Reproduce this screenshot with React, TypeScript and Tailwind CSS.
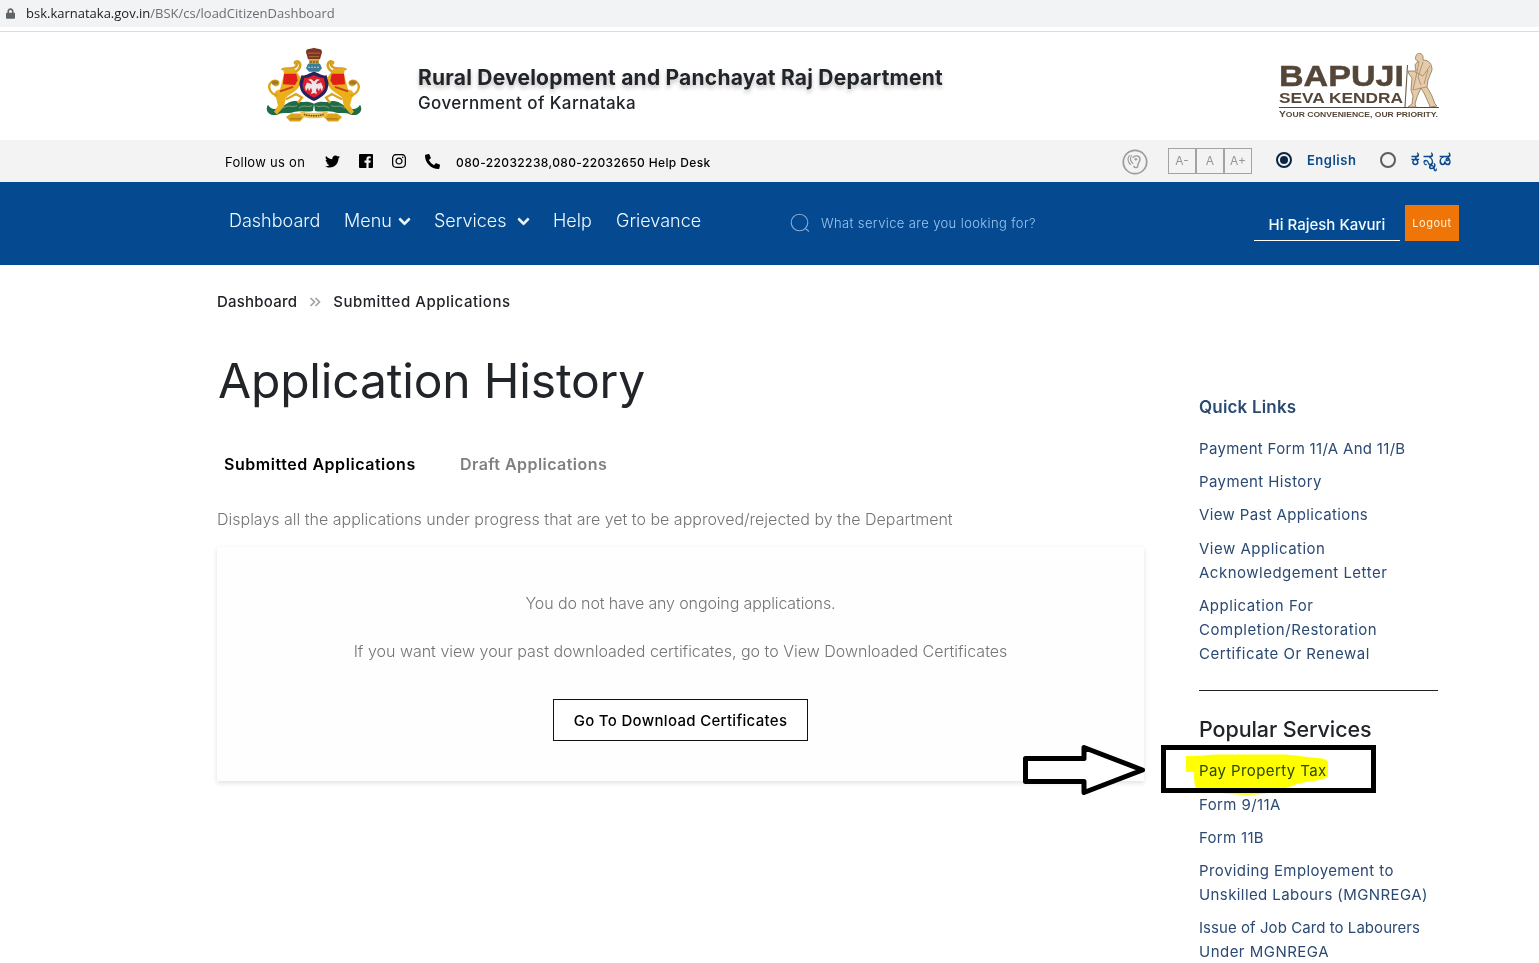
import type { ReactNode } from "react";
import { FaLock, FaTwitter, FaInstagram, FaPhoneAlt, FaChevronDown } from "react-icons/fa";

function Emblem() {
  const lion = (
    <g>
      <path d="M34 44C30 52 24 54 20 58L18 68L11 77L8 74L12 67L10 58C6 56 8 50 14 49L17 36L19 28H30L35 36Z" fill="#e9b01c" />
      <path d="M12 56C4 54 1 46 5 41C8 37 14 39 12 43C10 46 7 43 9 42M20 60L30 54L36 58L32 64" fill="none" stroke="#dca41b" strokeWidth="2.4" />
      <path d="M5 41C8 37 14 39 12 43L7 44Z" fill="#a8752a" />
      <path d="M18 31H30L32 38L29 44L17 43Z" fill="#e01f18" />
      <path d="M14 51L27 46" stroke="#cf3a1c" strokeWidth="2" />
      <path d="M16 27C18 23 24 27 29 24C32 21 32 18 28 20M28 29C33 28 36 22 33 18C31 16 28 18 29 19" fill="none" stroke="#d4a01f" strokeWidth="2.6" />
      <path d="M17 25L29 26L30 31L18 31Z" fill="#e5ac1b" />
      <path d="M31 36L37 34L38 38L33 41Z" fill="#e5ac1b" />
    </g>
  );
  const foliage = (
    <g>
      <path d="M48 65C40 60 36 65 30 62C24 61 20 66 15 69C8 73 4 70 2 66C-2 73 4 80 12 77C17 74 22 77 29 74C35 72 40 75 47 73Z" fill="#1d6b47" />
      <path d="M17 70C23 65 25 70 31 67M33 70C38 65 42 70 46 67" fill="none" stroke="#86a57b" strokeWidth="1" />
      <path d="M25 76L20 80L24 85H34L38 80L34 76Z" fill="#dca41b" />
      <path d="M24 82H35" stroke="#9b681d" strokeWidth="1" />
    </g>
  );
  return (
    <svg viewBox="0 0 96 90" className="h-[80px] w-[96px] shrink-0" preserveAspectRatio="none">
      {foliage}
      <g transform="translate(96 0) scale(-1 1)">{foliage}</g>
      {lion}
      <g transform="translate(96 0) scale(-1 1)">{lion}</g>
      <path d="M40 7C40 2 45 4 48 2C51 4 56 2 56 7L54 15H42Z" fill="#7c3423" />
      <path d="M42 8H54M43 12H53" stroke="#b5743f" strokeWidth="1" />
      <path d="M43 15H53V21H43Z" fill="#c9a23d" />
      <path d="M44 18H52" stroke="#59432a" strokeWidth="1.2" strokeDasharray="2 1" />
      <path d="M42 20H54L56 25L53 29H43L40 25Z" fill="#3c7d96" />
      <path d="M42 24H54" stroke="#a8d3dc" strokeWidth="1.2" strokeDasharray="2 1" />
      <path d="M35 33C40 34 42 31 48 29C54 31 56 34 61 33C60 37 64 40 62 46C61 55 54 58 48 62C42 58 35 55 34 46C32 40 36 37 35 33Z" fill="#27215c" />
      <path d="M38 36C43 36 45 34 48 33C51 34 53 36 58 36C58 40 60 43 59 46C58 52 53 55 48 58C43 55 38 52 37 46C36 43 38 40 38 36Z" fill="#dc1f2c" />
      <path d="M48 40L45 37L42 38L45 40L46 43L41 41L39 46L40 51L42 47L43 51L45 47L46 50L45 54L48 53L51 54L50 50L51 47L53 51L54 47L56 51L57 46L55 41L50 43L51 40L54 38L51 37Z" fill="#eee7ea" />
      <path d="M34 73C42 76 54 76 62 73L61 79C53 82 43 82 35 79Z" fill="#edc04b" />
      <path d="M38 77C44 79 52 79 58 77" fill="none" stroke="#6e4a17" strokeWidth="1.6" strokeDasharray="1.5 .8" />
    </svg>
  );
}

function BapujiLogo() {
  return (
    <svg viewBox="0 0 164 70" className="h-[70px] w-[164px] shrink-0" fontFamily="'Liberation Sans', sans-serif" fontWeight="700" fill="#544638">
      <text x="1" y="36" fontSize="30" textLength="125" lengthAdjust="spacingAndGlyphs" stroke="#544638" strokeWidth=".5">BAPUJI</text>
      <text x="1" y="53" fontSize="14.500" textLength="124" lengthAdjust="spacingAndGlyphs">SEVA KENDRA</text>
      <path d="M1 57.5H161" stroke="#544638" strokeWidth="1.2" />
      <text x="1" y="67" fontSize="7.500" textLength="159" lengthAdjust="spacingAndGlyphs">
        <tspan fontSize="9">Y</tspan>OUR CONVENIENCE, OUR PRIORITY.
      </text>
      <g stroke="#8b7259" strokeWidth=".8" strokeLinejoin="round">
        <path d="M138 6C139 2 145 3 145 7L145 10C151 10 154 14 154 20L150 30L149 37L154 46L157 54L159 56L152 57L151 54L146 43L143 38L139 47L137 54L138 57H130L134 54L135 46L133 40L134 28L131 24L130 21L135 21L138 21L137 15L140 11C137 10 137 8 138 6Z" fill="#e6cba9" />
        <path d="M141 11L139 22L135 40L143 38L149 37M145 12L140 27L143 35M152 16L145 26L137 22M150 20L146 34" fill="none" strokeWidth=".6" />
      </g>
      <path d="M129.500 15L127 57" stroke="#6f5d4b" strokeWidth="1.1" />
    </svg>
  );
}

function FacebookIcon() {
  return (
    <svg viewBox="0 0 14 14" className="ml-[19px] h-[14px] w-[14px]">
      <path d="M1 0H13Q14 0 14 1V13Q14 14 13 14H9.600V8.700H11.400L11.700 6.600H9.600V5.300Q9.600 4.300 10.700 4.300H11.800V2.400Q11 2.200 10.100 2.200Q7.400 2.200 7.400 5V6.600H5.500V8.700H7.400V14H1Q0 14 0 13V1Q0 0 1 0Z" />
    </svg>
  );
}

function EarIcon() {
  return (
    <svg viewBox="0 0 26 26" className="h-[26px] w-[26px] shrink-0" fill="none" stroke="#9b9b9b" strokeLinecap="round">
      <circle cx="13" cy="13" r="11.700" strokeWidth="1.700" />
      <path d="M11 8.500C12 6.400 17.500 5.800 18 9.800C18.300 13 15.500 14 15.800 16.500C16 19 13 19.300 11.800 17.300" strokeWidth="1.400" />
      <circle cx="13.800" cy="10.300" r="1.100" fill="#9b9b9b" strokeWidth=".5" />
      <path d="M9.500 6.500C7.800 9 8.200 12 11 14.500M7.300 6.500C5.300 9.500 6 13 8.500 15.500" strokeWidth="1.100" />
    </svg>
  );
}

function Radio({ on }: { on?: boolean }) {
  return on ? (
    <span className="flex h-4 w-4 items-center justify-center rounded-full border-2 border-[#0b2545]">
      <span className="h-2 w-2 rounded-full bg-[#0b2545]" />
    </span>
  ) : (
    <span className="h-4 w-4 rounded-full border-2 border-[#5c5c5c]" />
  );
}

function SideLink({ children, tracking = "tracking-[0.4px]" }: { children: ReactNode; tracking?: string }) {
  return <li className={`pb-[9.200px] text-[15px] leading-6 whitespace-nowrap text-[#2b4a73] ${tracking}`}>{children}</li>;
}

export default function App() {
  return (
    <div className="relative flex h-[963px] w-[1539px] flex-col overflow-hidden bg-white font-[Inter,'Noto_Sans',sans-serif] text-[#212529]">
      <div className="flex h-[27px] shrink-0 items-center bg-[#f1f3f4] pl-[6px] font-['Open_Sans',sans-serif] text-[13px] text-[#202124]">
        <FaLock className="mr-[11px] h-[11px] w-[9px] text-[#5f6368]" />
        <span>bsk.karnataka.gov.in</span>
        <span className="text-[#6b6f74]">/BSK/cs/loadCitizenDashboard</span>
      </div>
      <div className="h-[5px] shrink-0 border-b border-[#dadce4]" />

      <header className="flex h-[108px] shrink-0 items-start pl-[266px]">
        <div className="pt-[14px]"><Emblem /></div>
        <div className="ml-[56px] w-[860px] pt-[33px]">
          <h1 className="text-[21px] leading-[26px] font-bold tracking-[0.220px] [text-shadow:0_3px_4px_rgba(0,0,0,0.25)]">Rural Development and Panchayat Raj Department</h1>
          <p className="text-[17px] leading-[24px] font-medium tracking-[0.410px]">Government of Karnataka</p>
        </div>
        <div className="pt-[18px]"><BapujiLogo /></div>
      </header>

      <div className="flex h-[42px] shrink-0 items-center bg-[#f3f3f3] pl-[225px] text-black">
        <span className="w-[100px] pt-[3px] text-[13px] tracking-[0.280px]">Follow us on</span>
        <FaTwitter className="h-[15px] w-[15px]" />
        <FacebookIcon />
        <FaInstagram className="ml-[18px] h-[16px] w-[16px]" />
        <FaPhoneAlt className="ml-[18px] h-[15px] w-[15px]" />
        <span className="ml-[16px] w-[666px] pt-[3px] text-[12px] font-medium tracking-[0.380px]">080-22032238,080-22032650 Help Desk</span>
        <div className="pt-[2px]"><EarIcon /></div>
        <div className="ml-[20px] flex h-[26px] w-[84px] divide-x-2 divide-[#a3a3a3] border border-[#a3a3a3] text-center text-[12px] leading-[24px] text-[#969696]">
          <span className="flex-1">A-</span>
          <span className="flex-1">A</span>
          <span className="flex-1">A+</span>
        </div>
        <div className="ml-[24px] flex h-[20px] items-center self-start pt-[19px] font-semibold text-[#0b4a8c]">
          <Radio on />
          <span className="ml-[15px] w-[73px] pt-[2px] text-[13px] tracking-[0.500px]">English</span>
          <Radio />
          <span className="ml-[15px] flex items-center pb-[2px] text-[19px] leading-[20px] font-bold tracking-[2.500px]">ಕನ್ನಡ</span>
        </div>
      </div>

      <nav className="flex h-[83px] shrink-0 items-start bg-[#054a91] pl-[229px] text-[#f2fbff]">
        <div className="flex items-center pt-[29px] text-[18px] leading-[20px] font-light">
          <span className="w-[115px]">Dashboard</span>
          <span className="w-[54px]">Menu</span>
          <FaChevronDown className="mr-[23px] h-[13px] w-[13px]" stroke="currentColor" strokeWidth="30" />
          <span className="w-[83px]">Services</span>
          <FaChevronDown className="mr-[23px] h-[13px] w-[13px]" stroke="currentColor" strokeWidth="30" />
          <span className="w-[63px]">Help</span>
          <span className="w-[174px]">Grievance</span>
        </div>
        <div className="flex w-[464px] items-center pt-[31px] text-[#9cc6f2]">
          <svg viewBox="0 0 20 20" className="mr-[11px] h-5 w-5" fill="none" stroke="#86abd8" strokeWidth="1.100">
            <circle cx="9.500" cy="9.500" r="8.300" />
            <path d="M15.500 15.500L19 18.500" />
          </svg>
          <span className="text-[13px] leading-[19px] font-light tracking-[0.390px]">What service are you looking for?</span>
        </div>
        <div className="mt-[32px] h-[27px] w-[146px] border-b border-white text-center text-[15px] leading-[22px] font-medium">Hi Rajesh Kavuri</div>
        <button className="mt-[23px] ml-[5px] h-[36px] w-[54px] bg-[#ef7508] text-[11px] tracking-[0.500px] text-[#fff4d8]">Logout</button>
      </nav>

      <main className="flex items-start pl-[217px]">
        <section className="w-[927px]">
          <div className="mt-[26px] flex h-[22px] items-center text-[15px] font-medium">
            <span className="tracking-[0.220px]">Dashboard</span>
            <svg viewBox="0 0 12 10" className="mx-[12px] h-[10px] w-[12px]" fill="none" stroke="#a0a0a0" strokeWidth="1.600">
              <path d="M1.500 1L5.500 5L1.500 9M6.500 1L10.500 5L6.500 9" />
            </svg>
            <span className="tracking-[0.520px]">Submitted Applications</span>
          </div>
          <h2 className="mt-[38px] ml-[1px] text-[48px] leading-[60px] tracking-[-0.180px]">Application History</h2>
          <div className="mt-[41px] flex pl-[7px] text-[16px] leading-[24px] font-semibold">
            <span className="w-[236px] tracking-[0.550px] text-black">Submitted Applications</span>
            <span className="tracking-[0.450px] text-[#808080]">Draft Applications</span>
          </div>
          <p className="mt-[31px] text-[16px] leading-[24px] font-light text-[#747474]">Displays all the applications under progress that are yet to be approved/rejected by the Department</p>
          <div className="mt-[16px] flex h-[234px] flex-col items-center bg-[#fefefe] pt-[44px] text-[16px] leading-[24px] font-light text-[#747474] shadow-[0_2px_5px_rgba(0,0,0,0.12)]">
            <p className="tracking-[-0.130px]">You do not have any ongoing applications.</p>
            <p className="mt-[24px]">If you want view your past downloaded certificates, go to View Downloaded Certificates</p>
            <button className="mt-[36px] h-[42px] w-[255px] border border-[#111] bg-white pt-[2px] text-[15px] font-medium tracking-[0.310px] text-black">Go To Download Certificates</button>
          </div>
        </section>

        <aside className="ml-[55px] w-[239px] pt-[130px]">
          <h3 className="text-[17px] leading-[24px] font-semibold tracking-[0.180px] text-[#2b4a73]">Quick Links</h3>
          <ul className="mt-[18px]">
            <SideLink tracking="tracking-[0.310px]">Payment Form 11/A And 11/B</SideLink>
            <SideLink>Payment History</SideLink>
            <SideLink tracking="tracking-[0.350px]">View Past Applications</SideLink>
            <SideLink tracking="tracking-[0.500px]">View Application<br />Acknowledgement Letter</SideLink>
            <SideLink tracking="tracking-[0.520px]">Application For<br />Completion/Restoration<br />Certificate Or Renewal</SideLink>
          </ul>
          <hr className="mt-[15px] border-[#222]" />
          <h3 className="mt-[24px] text-[21.500px] leading-[28px] font-medium tracking-[-0.100px]">Popular Services</h3>
          <ul className="mt-[16.500px]">
            <SideLink>Pay Property Tax</SideLink>
            <SideLink tracking="tracking-[0.400px]">Form 9/11A</SideLink>
            <SideLink tracking="tracking-[0.300px]">Form 11B</SideLink>
            <SideLink tracking="tracking-[0.410px]">Providing Employement to<br />Unskilled Labours (MGNREGA)</SideLink>
            <SideLink tracking="tracking-[0.060px]">Issue of Job Card to Labourers<br /><span className="tracking-[0.480px]">Under MGNREGA</span></SideLink>
          </ul>
        </aside>
      </main>

      <svg viewBox="0 0 144 50" className="absolute top-[750px] left-[1185px] h-[50px] w-[144px] mix-blend-multiply">
        <path d="M1 6H10L30 4.500H96C108 4.500 118 7 128 7.500C137 8 143 9 143 13V27C136 31 122 31 112 34C100 38 92 43 72 44.500C50 46 30 42 12 40C9 35 9 28 9 22H1Z" fill="#ffff00" />
      </svg>
      <div className="absolute top-[745px] left-[1161px] h-[48px] w-[215px] border-[5px] border-black" />
      <svg viewBox="0 0 124 52" className="absolute top-[744px] left-[1022px] h-[52px] w-[124px]">
        <path d="M3.500 14.500H62V3.500L120.500 26L62 48.500V37.500H3.500Z" fill="#fff" stroke="#000" strokeWidth="5" strokeLinejoin="round" />
      </svg>
    </div>
  );
}
